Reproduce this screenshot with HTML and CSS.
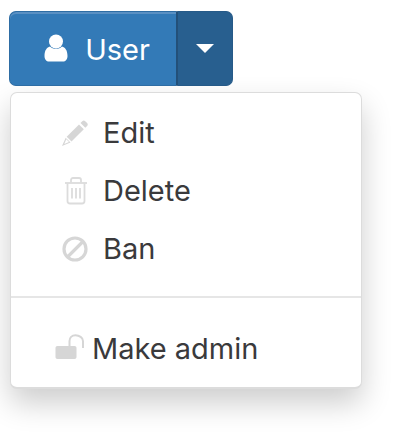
FILE: index.html
```html
<!DOCTYPE html>
<html lang="en">
<head>
<meta charset="UTF-8">
<meta name="viewport" content="width=device-width, initial-scale=1.0">
<title>User menu</title>
<link rel="stylesheet" href="styles.css">
</head>
<body>
<div class="btn-group">
  <button class="btn btn-main">
    <svg class="icon-user" viewBox="0 0 24 28" width="24" height="28"><circle cx="12" cy="7.500" r="7"/><path d="M.5 22c0-6 2.500-8.500 5.500-9.500 1.500 1.500 3.500 2.300 6 2.300s4.500-.8 6-2.300c3 1 5.500 3.500 5.500 9.500 0 3.500-2 5.500-4.500 5.500H5c-2.500 0-4.500-2-4.500-5.500z"/></svg>
    User
  </button>
  <button class="btn btn-caret"><span class="caret"></span></button>
</div>
<div class="menu">
  <a class="item">
    <span class="ico">
      <svg viewBox="0 0 28 28" width="28" height="28"><path class="gray" d="M19.500 4l1.800-1.800c.9-.9 2-.9 2.900 0l1.900 1.900c.9.9.9 2 0 2.900L24.300 8.800z"/><path class="gray" d="M18 5.500l4.800 4.800L10.500 22.600l-4.800-4.800z"/><path class="gray" d="M4.700 18.800l4.800 4.800L1 27z"/><path class="cut" d="M5.300 20.300l2.700 2.700-4.700 1.900z"/></svg>
    </span>
    Edit
  </a>
  <a class="item">
    <span class="ico">
      <svg viewBox="0 0 28 28" width="28" height="28"><g class="line"><path d="M4 6h22"/><path d="M10 5.500V3c0-1.200.8-2 2-2h6c1.200 0 2 .8 2 2v2.500"/><path d="M6.500 6.500V24c0 1.500 1 2.500 2.500 2.500h12c1.500 0 2.500-1 2.500-2.500V6.500"/><path d="M11 11v10.500M15 11v10.500M19 11v10.500"/></g></svg>
    </span>
    Delete
  </a>
  <a class="item">
    <span class="ico">
      <svg viewBox="0 0 28 28" width="28" height="28"><g class="ring"><circle cx="14" cy="14" r="11"/><path d="M6.500 22L22 6.500"/></g></svg>
    </span>
    Ban
  </a>
  <div class="divider"></div>
  <a class="item item-admin">
    <svg class="ico-lock" viewBox="0 0 30 26" width="30" height="26"><path class="gray" d="M2.500 12H19.500c1.200 0 2 .8 2 2v9c0 1.200-.8 2-2 2H2.500C1.200 25 .5 24.200.5 23v-9c0-1.200.7-2 2-2z"/><path class="shackle" d="M14.500 12V7c0-3.200 2.300-5.800 6-5.800s7.500 2.600 7.500 5.800v7"/></svg>
    Make admin
  </a>
</div>
</body>
</html>
```

FILE: styles.css
```css
html {
  height: 100%;
}

body {
  margin: 0;
  padding: 11px 9px 0;
  box-sizing: border-box;
  height: 100%;
  overflow: hidden;
  background-color: #fff;
  font-family: Inter, Lato, sans-serif;
  color: #3a3a3c;
}

.btn-group {
  display: flex;
  width: 224px;
  height: 75px;
}

.btn {
  margin: 0;
  padding: 0;
  color: #fff;
  font-family: inherit;
  font-size: 29px;
  display: flex;
  align-items: center;
  justify-content: center;
}

.btn-main {
  width: 167px;
  gap: 17px;
  padding: 2px 0 0 8px;
  background-color: #337ab7;
  border: 1px solid #2e6da4;
  border-right: none;
  border-radius: 7px 0 0 7px;
  box-shadow: inset 0 2px 0 #5a90c3;
}

.icon-user {
  fill: #fff;
  margin-bottom: 4px;
}

.btn-caret {
  width: 57px;
  background-color: #285f8f;
  border: 1px solid #265a88;
  border-left: 2px solid #235079;
  border-radius: 0 7px 7px 0;
}

.caret {
  width: 0;
  height: 0;
  border-top: 9px solid #fff;
  border-left: 9px solid transparent;
  border-right: 9px solid transparent;
}

.menu {
  width: 350px;
  height: 283px;
  margin: 6px 0 0 1px;
  padding-top: 11px;
  background-color: #fff;
  border: 1px solid #dcdcdc;
  border-bottom-width: 2px;
  border-radius: 7px;
  box-shadow: 0 14px 30px rgba(0, 0, 0, 0.2);
}

.item {
  display: flex;
  align-items: center;
  box-sizing: border-box;
  height: 58px;
  padding: 0 0 2px 50px;
  font-size: 29px;
}

.ico {
  width: 28px;
  height: 28px;
  margin: 2px 14px 0 0;
}

.gray {
  fill: #d6d6d6;
}

.cut {
  fill: #fff;
}

.line {
  fill: none;
  stroke: #dcdcdc;
  stroke-width: 1.8;
}

.ring {
  fill: none;
  stroke: #d6d6d6;
  stroke-width: 3.2;
}

.shackle {
  fill: none;
  stroke: #d6d6d6;
  stroke-width: 2;
}

.divider {
  height: 2px;
  background-color: #e6e6e6;
  margin-top: 18px;
}

.item-admin {
  margin-top: 22px;
  padding-left: 44px;
}

.ico-lock {
  margin: 0 7px 2px 0;
}
```
